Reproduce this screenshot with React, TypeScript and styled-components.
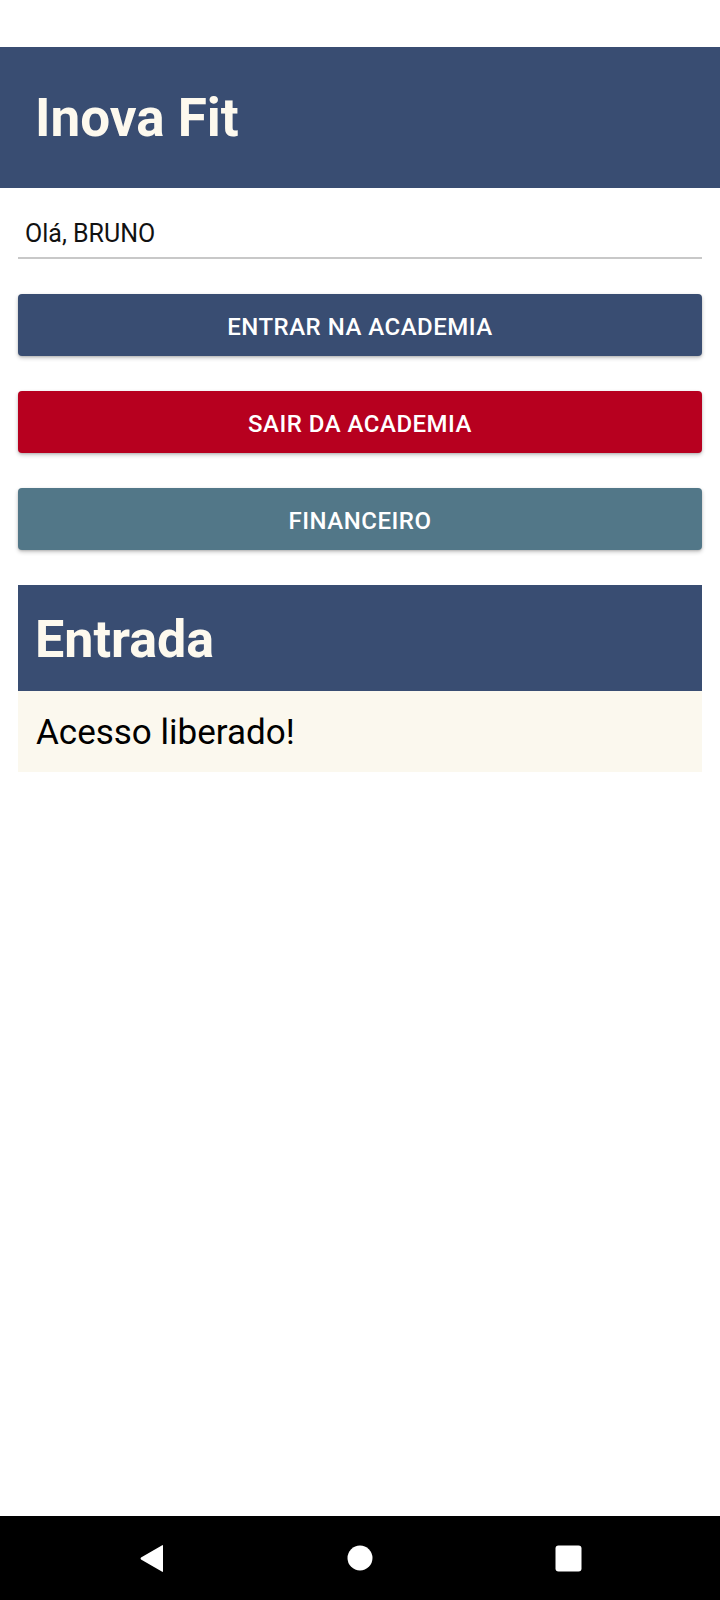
import React from 'react';
import styled, { createGlobalStyle } from 'styled-components';

const GlobalStyle = createGlobalStyle`
    html, body {
        margin:0;
        padding:0;
        background:#ffffff;
        font-family:Roboto, "Noto Sans", Arial, sans-serif;
    }
    * {
        box-sizing:border-box;
    }
`

const Page = styled.div`
    display:flex;
    flex-direction:column;
    height:100vh;
    background:#ffffff;
`

const StatusBar = styled.div`
    height:47px;
    flex-shrink:0;
`

const Header = styled.header`
    height:141px;
    display:flex;
    align-items:center;
    padding:2px 0 0 35px;
    background:#394d72;
    flex-shrink:0;
`

const Title = styled.h1`
    margin:0;
    font-size:53px;
    font-weight:700;
    line-height:1;
    color:#fdf9ee;
`

const Content = styled.main`
    display:flex;
    flex-direction:column;
    padding:0 18px;
`

const Greeting = styled.div`
    margin-top:30px;
    padding:1px 7px 8px;
    font-size:25px;
    line-height:30px;
    color:#111111;
    border-bottom:2px solid #c8c8c8;
`

const Buttons = styled.div`
    display:flex;
    flex-direction:column;
    gap:35px;
    margin-top:35px;
`

const Button = styled.button<{ $bg: string }>`
    height:62px;
    width:100%;
    padding:3px 0 0;
    border:none;
    border-radius:4px;
    background:${props => props.$bg};
    color:#ffffff;
    font-family:Roboto, "Noto Sans", Arial, sans-serif;
    font-size:24px;
    font-weight:500;
    letter-spacing:0.5px;
    text-transform:uppercase;
    box-shadow:0 2px 4px rgba(0,0,0,0.22), 0 1px 2px rgba(0,0,0,0.12);
    cursor:pointer;
`

const Card = styled.section`
    margin-top:35px;
    display:flex;
    flex-direction:column;
`

const CardHead = styled.div`
    height:106px;
    display:flex;
    align-items:center;
    padding:3px 0 0 17px;
    background:#394d72;
`

const CardTitle = styled.h2`
    margin:0;
    font-size:52px;
    font-weight:700;
    line-height:1;
    color:#fdf9ee;
`

const CardBody = styled.div`
    height:81px;
    display:flex;
    align-items:center;
    padding:2px 0 0 18px;
    background:#fbf8ee;
    font-size:35px;
    color:#000000;
`

const Spacer = styled.div`
    flex:1;
`

const NavBar = styled.nav`
    height:84px;
    flex-shrink:0;
    background:#000000;
    display:flex;
    align-items:center;
    justify-content:center;
`

const NavSlot = styled.div`
    width:208px;
    display:flex;
    justify-content:center;
`

const App = () => {
    return (
        <>
            <GlobalStyle />
            <Page>
                <StatusBar />
                <Header>
                    <Title>Inova Fit</Title>
                </Header>
                <Content>
                    <Greeting>Olá, BRUNO</Greeting>
                    <Buttons>
                        <Button $bg="#394d72">Entrar na academia</Button>
                        <Button $bg="#b7001f">Sair da academia</Button>
                        <Button $bg="#527788">Financeiro</Button>
                    </Buttons>
                    <Card>
                        <CardHead>
                            <CardTitle>Entrada</CardTitle>
                        </CardHead>
                        <CardBody>Acesso liberado!</CardBody>
                    </Card>
                </Content>
                <Spacer />
                <NavBar>
                    <NavSlot>
                        <svg width="26" height="29" viewBox="0 0 26 29">
                            <path d="M24 2 L24 27 Q24 28.5 22.8 27.6 L2 15.4 Q1 14.5 2 13.6 L22.8 1.4 Q24 0.5 24 2 Z" fill="#ffffff" />
                        </svg>
                    </NavSlot>
                    <NavSlot>
                        <svg width="26" height="26" viewBox="0 0 26 26">
                            <circle cx="13" cy="13" r="12.5" fill="#ffffff" />
                        </svg>
                    </NavSlot>
                    <NavSlot>
                        <svg width="27" height="27" viewBox="0 0 27 27">
                            <rect x="0.5" y="0.5" width="26" height="26" rx="3" fill="#ffffff" />
                        </svg>
                    </NavSlot>
                </NavBar>
            </Page>
        </>
    );
}

export default App;
